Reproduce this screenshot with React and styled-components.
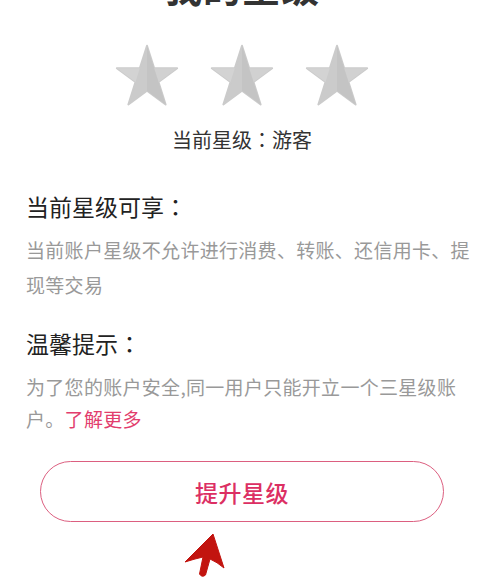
import React from "react";
import styled, { createGlobalStyle } from "styled-components";

const GlobalStyle = createGlobalStyle`
  html, body {
    margin: 0;
    padding: 0;
    background: #fff;
    overflow: hidden;
  }
  body {
    font-family: "Noto Sans CJK SC", "Noto Sans", sans-serif;
  }
`;

const Page = styled.div`
  position: relative;
  width: 484px;
  height: 581px;
  overflow: hidden;
  background: #fff;
`;

const Title = styled.h1`
  margin: -33px 0 0;
  font-size: 38px;
  line-height: 38px;
  font-weight: 700;
  color: #333;
  text-align: center;
  letter-spacing: 1px;
`;

const StarRow = styled.div`
  display: flex;
  justify-content: center;
  gap: 29px;
  margin-top: 38px;
`;

const StarIcon = styled.svg`
  width: 66px;
  height: 65px;
  display: block;
`;

const Current = styled.div`
  margin-top: 18px;
  text-align: center;
  font-size: 20px;
  line-height: 28px;
  color: #333;
`;

// centred full-width colon, as in the screenshot
const Colon = styled.span`
  font-family: "Noto Sans CJK TC", "Noto Sans CJK SC", sans-serif;
  line-height: 0;
`;

const Section = styled.section`
  padding: 0 12px 0 26px;
  margin-top: ${(p) => p.$top}px;
`;

const SectionTitle = styled.h2`
  margin: 0;
  font-size: 23px;
  line-height: 32px;
  font-weight: 400;
  color: #222;
`;

const Body = styled.p`
  margin: ${(p) => p.$gap}px 0 0;
  width: 446px;
  font-size: 19px;
  line-height: ${(p) => p.$lh}px;
  letter-spacing: 0.3px;
  color: #999;
`;

const More = styled.a`
  color: #e23d6d;
  text-decoration: none;
`;

const ButtonWrap = styled.div`
  position: relative;
  display: flex;
  justify-content: center;
  margin-top: 26px;
`;

const UpgradeButton = styled.button`
  width: 404px;
  height: 61px;
  border: 1.5px solid #dc5f80;
  border-radius: 31px;
  background: #fff;
  color: #dc2f63;
  font-family: "Noto Sans CJK SC", "Noto Sans", sans-serif;
  font-size: 23px;
  font-weight: 500;
  letter-spacing: 0.5px;
  cursor: pointer;
`;

const Arrow = styled.svg`
  position: absolute;
  left: 180px;
  top: 70px;
  width: 50px;
  height: 50px;
`;

const Star = () => (
  <StarIcon viewBox="0 0 100 96" preserveAspectRatio="none">
    <polygon
      points="50,4 60.78,37.16 95.65,37.17 67.44,57.67 78.22,90.83 50,70.34 21.78,90.83 32.56,57.67 4.35,37.17 39.22,37.16"
      fill="#cbcbcb"
      stroke="#cbcbcb"
      strokeWidth="3"
      strokeLinejoin="round"
    />
    <polygon points="4.35,37.17 39.22,37.16 32.56,57.67" fill="#d3d3d3" />
    <polygon points="60.78,37.16 95.65,37.17 67.44,57.67" fill="#d1d1d1" />
    <polygon points="50,4 50,70.34 78.22,90.83 67.44,57.67 60.78,37.16" fill="#c4c4c4" />
  </StarIcon>
);

export default function App() {
  return (
    <Page>
      <GlobalStyle />
      <Title>我的星级</Title>
      <StarRow>
        <Star />
        <Star />
        <Star />
      </StarRow>
      <Current>
        当前星级<Colon>：</Colon>游客
      </Current>

      <Section $top={36}>
        <SectionTitle>
          当前星级可享<Colon>：</Colon>
        </SectionTitle>
        <Body $gap={10} $lh={35}>
          当前账户星级不允许进行消费、转账、还信用卡、提现等交易
        </Body>
      </Section>

      <Section $top={25}>
        <SectionTitle>
          温馨提示<Colon>：</Colon>
        </SectionTitle>
        <Body $gap={12} $lh={32}>
          为了您的账户安全,同一用户只能开立一个三星级账户。
          <More href="#">了解更多</More>
        </Body>
      </Section>

      <ButtonWrap>
        <UpgradeButton>提升星级</UpgradeButton>
        <Arrow viewBox="0 0 50 50">
          <path
            d="M33 3 L44 37 Q37 31 30 28 L25.5 44 Q22 47 19.5 43 L23 26 Q14 28 5 31 Z"
            fill="#c2140f"
            stroke="#c2140f"
            strokeWidth="1"
            strokeLinejoin="round"
          />
        </Arrow>
      </ButtonWrap>
    </Page>
  );
}
